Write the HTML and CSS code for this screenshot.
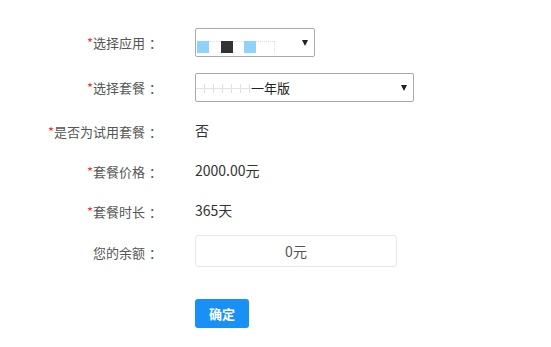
FILE: index.html
```html
<!DOCTYPE html>
<html>
<head>
    <title>购买套餐</title>
    <link rel="stylesheet" href="styles.css">
</head>
<body>
    <form class="buy-form">
        <div class="row row-select">
            <label class="label"><span class="req">*</span>选择应用<span class="colon">：</span></label>
            <div class="select select-app">
                <span class="pix pix-blue"></span>
                <span class="pix-line"></span>
                <span class="pix pix-dark"></span>
                <span class="pix-line short"></span>
                <span class="pix pix-blue"></span>
                <span class="pix-line long"></span>
                <span class="arrow"></span>
            </div>
        </div>

        <div class="row row-select">
            <label class="label"><span class="req">*</span>选择套餐<span class="colon">：</span></label>
            <div class="select select-plan">
                <span class="faint"></span>一年版
                <span class="arrow"></span>
            </div>
        </div>

        <div class="row">
            <label class="label"><span class="req">*</span>是否为试用套餐<span class="colon">：</span></label>
            <div class="value">否</div>
        </div>

        <div class="row">
            <label class="label"><span class="req">*</span>套餐价格<span class="colon">：</span></label>
            <div class="value">2000.00元</div>
        </div>

        <div class="row">
            <label class="label"><span class="req">*</span>套餐时长<span class="colon">：</span></label>
            <div class="value">365天</div>
        </div>

        <div class="row row-balance">
            <label class="label">您的余额<span class="colon">：</span></label>
            <div class="balance">0元</div>
        </div>

        <div class="row row-btn">
            <span class="label"></span>
            <button type="button" class="btn">确定</button>
        </div>
    </form>
</body>
</html>
```

FILE: styles.css
```css
body {
    margin: 0;
    font-family: "Noto Sans CJK SC", "Open Sans", sans-serif;
    color: #333;
    background: #fff;
}
.buy-form {
    padding-top: 20px;
}
.row {
    display: flex;
    align-items: center;
    height: 40px;
}
.row-select {
    height: 45px;
}
.row-balance {
    height: 42px;
}
.row-btn {
    height: 29px;
    margin-top: 27px;
}
.label {
    width: 162px;
    margin-right: 33px;
    text-align: right;
    font-size: 13px;
    color: #555;
    padding-top: 3px;
}
.row-select .label {
    padding-top: 0;
}
.colon {
    padding-left: 4px;
}
.req {
    color: #e4393c;
}
.value {
    font-size: 14px;
    color: #333;
}
.select {
    position: relative;
    display: flex;
    align-items: center;
    height: 27px;
    border: 1px solid #a9a9a9;
    border-radius: 2px;
    font-size: 13px;
    color: #222;
    box-sizing: content-box;
}
.select-app {
    width: 118px;
}
.select-plan {
    width: 217px;
}
.arrow {
    position: absolute;
    right: 6px;
    top: 11px;
    width: 0;
    height: 0;
    border-left: 3.5px solid transparent;
    border-right: 3.5px solid transparent;
    border-top: 6px solid #222;
}
.pix {
    display: inline-block;
    width: 12px;
    height: 12px;
    margin-top: 9px;
}
.pix-blue {
    background: #8fd1ff;
}
.pix-dark {
    background: #333;
}
.select-app .pix:first-child {
    margin-left: 1px;
}
.pix-line {
    display: inline-block;
    width: 12px;
    height: 11px;
    margin-top: 9px;
    border-top: 1px dotted #ddd;
}
.pix-line.short {
    width: 11px;
}
.pix-line.long {
    width: 18px;
    border-right: 1px dotted #ddd;
}
.faint {
    display: inline-block;
    width: 55px;
    height: 9px;
    margin-top: 1px;
    background:
        linear-gradient(#ddd, #ddd) 0 4px / 100% 1px no-repeat,
        repeating-linear-gradient(90deg, transparent 0 8px, #d8d8d8 8px 9px);
    opacity: 0.8;
}
.balance {
    width: 200px;
    height: 30px;
    line-height: 30px;
    border: 1px solid #e8e8e8;
    border-radius: 3px;
    text-align: center;
    font-size: 14px;
    color: #555;
}
.btn {
    width: 54px;
    height: 29px;
    border: none;
    border-radius: 3px;
    background: #1890f5;
    color: #fff;
    font-family: inherit;
    font-size: 13px;
    font-weight: bold;
    padding: 0;
}
```
